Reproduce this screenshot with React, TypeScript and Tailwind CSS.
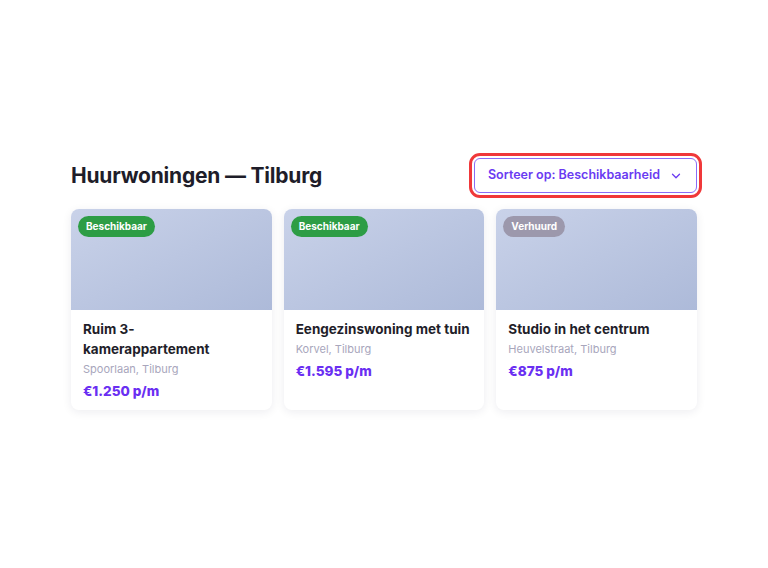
import { ChevronDown } from "lucide-react"

type Listing = {
  id: number
  title: string
  location: string
  price: string
  status: "Beschikbaar" | "Verhuurd"
  wrap?: boolean
}

const listings: Listing[] = [
  { id: 1, title: "Ruim 3-kamerappartement", location: "Spoorlaan, Tilburg", price: "€1.250 p/m", status: "Beschikbaar", wrap: true },
  { id: 2, title: "Eengezinswoning met tuin", location: "Korvel, Tilburg", price: "€1.595 p/m", status: "Beschikbaar" },
  { id: 3, title: "Studio in het centrum", location: "Heuvelstraat, Tilburg", price: "€875 p/m", status: "Verhuurd" },
]

export default function App() {
  return (
    <div className="flex min-h-screen items-center justify-center bg-white font-['Inter','Noto_Sans',sans-serif]">
      <main className="w-[626px]">
        <div className="mb-4 flex items-center justify-between">
          <h1 className="text-[21px] font-bold tracking-[-0.01em] text-[#1e1d29]">Huurwoningen — Tilburg</h1>
          <button className="inline-flex h-[35px] items-center gap-[9px] rounded-[6px] border-[1.5px] border-[#8a6cf7] bg-white pl-[13px] pr-[13px] text-[12.5px] font-semibold text-[#6a3bf2] outline-[3px] outline-offset-[2px] outline-[#f0383a] outline-solid">
            Sorteer op: Beschikbaarheid
            <ChevronDown className="h-3.5 w-3.5" strokeWidth={2.25} />
          </button>
        </div>

        <div className="grid grid-cols-3 gap-3">
          {listings.map(item => (
            <div
              key={item.id}
              className="overflow-hidden rounded-[8px] bg-white shadow-[0_2px_10px_rgba(30,30,60,0.08)]"
            >
              <div className="relative h-[101px] bg-gradient-to-br from-[#c9d2e9] to-[#adbad9]">
                <span
                  className={
                    item.status === "Beschikbaar"
                      ? "absolute left-[7px] top-[7px] rounded-full bg-[#2d9d45] px-2 py-[4px] text-[10px] font-bold leading-[13px] text-white"
                      : "absolute left-[7px] top-[7px] rounded-full bg-[#9c98ac] px-2 py-[4px] text-[10px] font-bold leading-[13px] text-white"
                  }
                >
                  {item.status}
                </span>
              </div>
              <div className="px-3 pb-[9px] pt-[9px]">
                <div
                  className={
                    item.wrap
                      ? "max-w-[150px] text-[13.5px] font-bold leading-[20px] text-[#1f1e2a]"
                      : "whitespace-nowrap text-[13.5px] font-bold leading-[20px] text-[#1f1e2a]"
                  }
                >
                  {item.title}
                </div>
                <div className="mt-[2px] text-[11px] leading-[16px] text-[#a8a6bc]">{item.location}</div>
                <div className="mt-[4px] text-[13.5px] font-extrabold leading-[20px] text-[#6a2ff2]">{item.price}</div>
              </div>
            </div>
          ))}
        </div>
      </main>
    </div>
  )
}
